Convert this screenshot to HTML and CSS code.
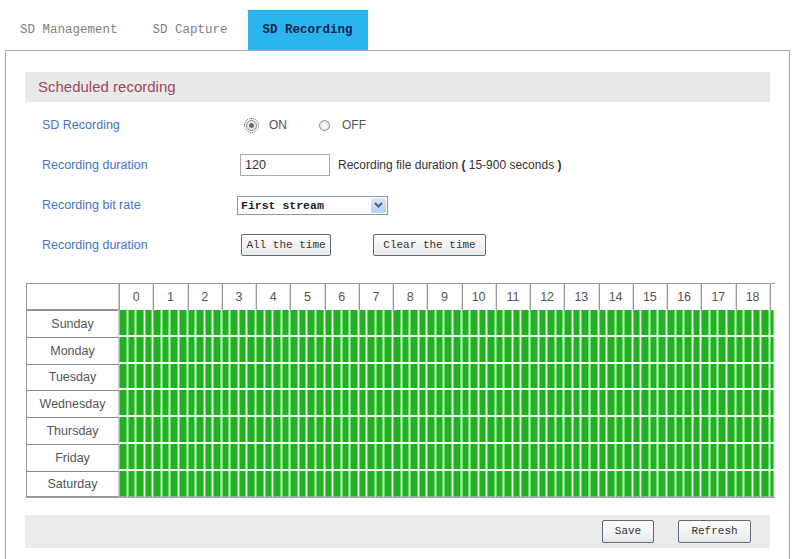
FILE: index.html
```html
<!DOCTYPE html>
<html lang="en">
<head>
    <meta charset="UTF-8">
    <title>SD Recording</title>
    <link rel="stylesheet" href="styles.css">
</head>
<body>
    <div class="tabs">
        <a class="tab">SD Management</a>
        <a class="tab">SD Capture</a>
        <a class="tab active">SD Recording</a>
    </div>

    <div class="panel">
        <div class="title">Scheduled recording</div>

        <div class="form">
            <div class="row">
                <label>SD Recording</label>
                <div class="ctrl">
                    <span class="radio checked"></span><span class="opt">ON</span>
                    <span class="radio"></span><span class="opt">OFF</span>
                </div>
            </div>
            <div class="row">
                <label>Recording duration</label>
                <div class="ctrl">
                    <input class="text" type="text" value="120">
                    <span class="hint">Recording file duration <b>(</b> 15-900 seconds <b>)</b></span>
                </div>
            </div>
            <div class="row">
                <label>Recording bit rate</label>
                <div class="ctrl">
                    <div class="select">
                        <span class="select-value">First stream</span>
                        <span class="select-arrow">
                            <svg width="9" height="6" viewBox="0 0 9 6"><path d="M1 1 L4.5 4.5 L8 1" fill="none" stroke="#4d6185" stroke-width="2"/></svg>
                        </span>
                    </div>
                </div>
            </div>
            <div class="row">
                <label>Recording duration</label>
                <div class="ctrl">
                    <button class="btn btn-all">All the time</button>
                    <button class="btn btn-clear">Clear the time</button>
                </div>
            </div>
        </div>

        <div class="sched-wrap">
            <div class="sched" id="sched"></div>
        </div>

        <div class="footer">
            <button class="btn btn-save">Save</button>
            <button class="btn btn-refresh">Refresh</button>
        </div>
    </div>

    <script src="script.js"></script>
</body>
</html>
```

FILE: styles.css
```css
body {
    margin: 0;
    font-family: "Liberation Sans", Arial, sans-serif;
    background: #fff;
}
.tabs {
    display: flex;
    gap: 5px;
    padding: 10px 0 0 5px;
    height: 40px;
}
.tab {
    padding: 0 15px;
    font: 12.5px "Liberation Mono", monospace;
    line-height: 40px;
    color: #808080;
}
.tab.active {
    background: #2bb5ee;
    color: #14244f;
    font-weight: bold;
}
.panel {
    border: 1px solid #aaa;
    margin: 0 8px 0 5px;
    padding: 21px 19px 30px;
}
.title {
    height: 30px;
    line-height: 30px;
    background: #e9e9e9;
    padding-left: 13px;
    color: #a3475a;
    font-size: 15px;
}
.form {
    padding: 3px 0 0 17px;
}
.row {
    display: flex;
    align-items: center;
    height: 40px;
}
.row label {
    width: 198px;
    color: #4573c4;
    font-size: 12.5px;
}
.ctrl {
    display: flex;
    align-items: center;
}
.radio {
    box-sizing: border-box;
    width: 11px;
    height: 11px;
    border-radius: 50%;
    border: 1px solid #8a8a8a;
    background: radial-gradient(#fff, #dcdcdc);
    margin-left: 6px;
    position: relative;
}
.radio.checked {
    outline: 1px dotted #555;
    outline-offset: 1px;
}
.radio.checked::after {
    content: "";
    position: absolute;
    left: 2px;
    top: 2px;
    width: 5px;
    height: 5px;
    border-radius: 50%;
    background: #5a765a;
}
.opt {
    font-size: 12px;
    color: #555;
    margin-left: 12px;
    margin-right: 32px;
}
.opt + .radio {
    margin-left: 0;
}
.text {
    box-sizing: border-box;
    width: 90px;
    height: 22px;
    border: 1px solid #aaa;
    padding: 0 4px;
    font: 12.5px "Liberation Sans", Arial, sans-serif;
    color: #333;
}
.hint {
    margin-left: 8px;
    font-size: 12px;
    color: #333;
}
.select {
    box-sizing: border-box;
    display: flex;
    align-items: center;
    justify-content: space-between;
    width: 151px;
    height: 19px;
    margin-left: -3px;
    border: 1px solid #7f9db9;
    background: #fff;
}
.select-value {
    font: bold 11.5px "Liberation Mono", monospace;
    color: #222;
    padding-left: 3px;
}
.select-arrow {
    display: flex;
    align-items: center;
    justify-content: center;
    width: 15px;
    height: 15px;
    margin-right: 1px;
    background: linear-gradient(#dbe6fc, #b7ccf5);
    border-radius: 2px;
}
.btn {
    box-sizing: border-box;
    height: 22px;
    padding: 0;
    background: linear-gradient(#ffffff, #e8e8e8);
    border: 1px solid #5b6d85;
    border-radius: 2px;
    font: 11px "Liberation Mono", monospace;
    color: #333;
}
.btn-all {
    width: 90px;
    margin-left: 1px;
}
.btn-clear {
    width: 113px;
    margin-left: 42px;
}
.sched-wrap {
    width: 750px;
    margin: 18px 0 0 1px;
    overflow: hidden;
}
.sched {
    display: grid;
    grid-template-columns: 93px repeat(76, 8.575px) 5px;
    grid-template-rows: 27px repeat(7, 26.8px);
    width: max-content;
}
.corner, .hour, .day {
    box-sizing: border-box;
    display: flex;
    align-items: center;
    justify-content: center;
    background: #fff;
    font-size: 12.5px;
    color: #555;
}
.corner {
    border: 1px solid #999;
    border-right-color: #ccc;
}
.hour {
    grid-column: span 4;
    border-top: 1px solid #999;
    border-left: 1px solid #999;
    border-right: 1px solid #ddd;
}
.hour.tail {
    grid-column: span 1;
    border-right: 0;
}
.day {
    border-top: 1px solid #888;
    border-left: 1px solid #999;
    border-right: 1px solid #ccc;
}
.day.last {
    border-bottom: 2px solid #999;
}
.q {
    box-sizing: border-box;
    background: #22b022;
    box-shadow: inset 1px 0 #6ad86a, inset -1px 0 #6ad86a;
    border-right: 1px solid #eafbea;
    border-bottom: 2px solid #f2fff2;
}
.q.last {
    border-bottom: 2px solid #8fb08f;
}
.footer {
    display: flex;
    justify-content: flex-end;
    align-items: center;
    gap: 24px;
    height: 33px;
    margin-top: 17px;
    padding-right: 19px;
    background: #ebebeb;
}
.btn-save {
    width: 52px;
    height: 23px;
}
.btn-refresh {
    width: 73px;
    height: 23px;
}
```

FILE: script.js
```js
// build the schedule grid: hours shown in the panel x 4 quarters per day
var sched = document.getElementById('sched');
var days = ['Sunday', 'Monday', 'Tuesday', 'Wednesday', 'Thursday', 'Friday', 'Saturday'];
var hours = 19;

function cell(cls, text) {
    var el = document.createElement('div');
    el.className = cls;
    if (text !== undefined) el.textContent = text;
    sched.appendChild(el);
    return el;
}

cell('corner');
for (var h = 0; h < hours; h++) {
    cell('hour', h);
}
cell('hour tail');

days.forEach(function (day, i) {
    var last = i === days.length - 1 ? ' last' : '';
    cell('day' + last, day);
    for (var q = 0; q <= hours * 4; q++) {
        cell('q' + last);
    }
});
```
